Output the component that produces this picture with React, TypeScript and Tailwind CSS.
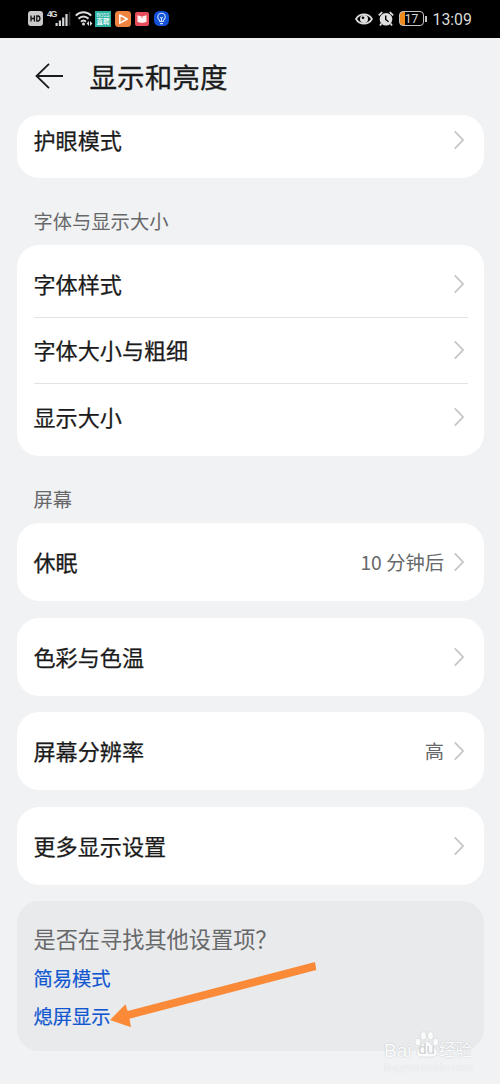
import type { ReactNode } from 'react';

const fontRows = ["字体样式", "字体大小与粗细", "显示大小"];

const screenRows = [
  { title: "休眠", value: "10 分钟后" },
  { title: "色彩与色温", value: "" },
  { title: "屏幕分辨率", value: "高" },
  { title: "更多显示设置", value: "" }
];

function Chevron() {
  return (
    <svg className="w-[10px] h-[20px] shrink-0" viewBox="0 0 10 20" fill="none" stroke="#c3c4c5" strokeWidth="1.7">
      <path d="M0.8 1.4L9 10L0.8 18.6" />
    </svg>
  );
}

function Row({ title, value }: { title: string; value?: string }) {
  return (
    <div className="flex w-full items-center justify-between">
      <span className="-mt-[2px] text-[22.1px] leading-8 text-[#1b1b1b] [-webkit-text-stroke:0.25px_#1b1b1b]">{title}</span>
      <div className="flex items-center gap-[10px] pr-[3.5px]">
        {value && <span className="text-[19.3px] leading-7 text-[#67686a]">{value}</span>}
        <Chevron />
      </div>
    </div>
  );
}

function Card({ children, className }: { children: ReactNode; className: string }) {
  return (
    <div className={`mx-[16.5px] rounded-[22px] bg-white pl-[17px] pr-[16px] ${className}`}>
      {children}
    </div>
  );
}

function StatusBar() {
  return (
    <div className="flex h-[37.5px] items-center justify-between bg-black pl-[28px] pr-[28px] text-[#d9d9d9]">
      <div className="flex items-center">
        {/* HD */}
        <svg className="w-[15px] h-[15px]" viewBox="0 0 15 15">
          <rect width="15" height="15" rx="3" fill="#c9c9c9" />
          <path d="M3 4.5V10.5M6.4 4.5V10.5M3 7.5H6.4M8.8 5V10H9.8C12.6 10 12.6 5 9.8 5Z" fill="none" stroke="#111" strokeWidth="1.3" />
        </svg>
        {/* signal */}
        <div className="ml-[4px] flex items-start">
          <span className="-mt-[1px] w-[8px] font-['Liberation_Sans',sans-serif] text-[9px] leading-[9px] font-bold tracking-[-1.5px]">4G</span>
          <svg className="w-[16px] h-[16px]" viewBox="0 0 16 16" fill="#d6d6d6">
            <rect x="0.5" y="12" width="2.2" height="3" />
            <rect x="3.8" y="9.5" width="2.2" height="5.5" />
            <rect x="7.1" y="6.5" width="2.2" height="8.5" />
            <rect x="10.4" y="3" width="2.2" height="12" />
            <rect x="13.7" y="1" width="1.6" height="14" fill="#333" />
          </svg>
        </div>
        {/* wifi */}
        <svg className="ml-[4px] w-[18px] h-[17px]" viewBox="0 0 18 17" fill="none" stroke="#dcdcdc" strokeWidth="2">
          <path d="M0.8 5.6C5 1.2 12 1.2 16.2 5.6M3.5 8.8C6.4 5.8 10.6 5.8 13.5 8.8M6 11.7C7.6 10.1 9.4 10.1 11 11.7" />
          <circle cx="8.5" cy="14" r="1.5" fill="#dcdcdc" stroke="none" />
          <path d="M14 11L11.6 13.5L14 16ZM15 11L17.4 13.5L15 16Z" fill="#dcdcdc" stroke="none" />
        </svg>
        <div className="ml-[2px] flex h-[16px] w-[16px] flex-col items-center justify-center bg-[#2fb4a4] text-white/90">
          <span className="text-[5px] leading-[6px]">BOSS</span>
          <span className="text-[6.5px] leading-[7px] font-bold">直聘</span>
        </div>
        <svg className="ml-[4px] w-[16px] h-[16px]" viewBox="0 0 16 16">
          <rect width="16" height="16" rx="3.5" fill="#ee8440" />
          <path d="M4.8 3.8V12.2L12.2 8Z" fill="#f08a4c" stroke="#fff" strokeWidth="1.5" strokeLinejoin="round" />
        </svg>
        <svg className="ml-[4px] w-[14px] h-[14px]" viewBox="0 0 14 14">
          <rect width="14" height="14" rx="2" fill="#e64c5c" />
          <path d="M2.5 3.2L7 4.6L11.5 3.2V10L7 11L2.5 10Z" fill="#fff1f1" />
          <path d="M7 4.6V6" stroke="#e64c5c" strokeWidth="0.8" />
        </svg>
        <svg className="ml-[5px] w-[15px] h-[15px]" viewBox="0 0 15 15">
          <rect width="15" height="15" rx="5.5" fill="#1351d8" />
          <path d="M5.8 10.5C5.6 8.8 3.8 8.3 3.8 5.9A3.7 3.7 0 0 1 11.2 5.9C11.2 8.3 9.4 8.8 9.2 10.5ZM6 12.6H9M6.3 6L7.5 7.5L8.7 6M7.5 7.5V10" fill="none" stroke="#cfe2ff" strokeWidth="1.1" />
        </svg>
      </div>

      <div className="flex items-center">
        {/* eye comfort */}
        <svg className="w-[18px] h-[14px]" viewBox="0 0 18 14">
          <path d="M1 7C4.5 0.8 13.5 0.8 17 7C13.5 13.2 4.5 13.2 1 7Z" fill="none" stroke="#dedede" strokeWidth="1.6" />
          <circle cx="9" cy="7" r="4" fill="#dedede" />
          <circle cx="8" cy="5.8" r="1.3" fill="#000" />
        </svg>
        {/* alarm */}
        <svg className="ml-[5px] w-[16px] h-[16px]" viewBox="0 0 16 16">
          <path d="M0.8 4.4L4.2 1.2M15.2 4.4L11.8 1.2M3.5 12.5L2 14.5M12.5 12.5L14 14.5" stroke="#dedede" strokeWidth="1.8" />
          <circle cx="8" cy="8.2" r="6.3" fill="#dedede" />
          <path d="M7.7 4.5V8.5L10.5 10.8" fill="none" stroke="#000" strokeWidth="1.4" />
        </svg>
        {/* battery */}
        <div className="ml-[5px] flex h-[15px] w-[25px] items-center justify-center rounded-[4px] border-[1.5px] border-[#c4c4c4] bg-linear-to-r from-[#ef8a1d] from-20% to-black to-20% font-[Roboto] text-[12px] leading-none">
          17
        </div>
        <div className="ml-[1px] h-[6px] w-[1.5px] bg-[#c4c4c4]" />
        <span className="ml-[6px] w-[39.5px] pt-[2px] font-[Roboto] text-[15.8px] leading-none">13:09</span>
      </div>
    </div>
  );
}

function Watermark() {
  return (
    <div className="absolute left-[384px] top-[1030px] text-[#fafbfb]">
      <svg className="absolute left-[30px] top-0 w-[26px] h-[28px]" viewBox="0 0 26 29" fill="#fafbfb" stroke="#d5d6d8" strokeWidth="0.7">
        <ellipse cx="3.5" cy="12.5" rx="3" ry="4" />
        <ellipse cx="9.3" cy="6" rx="3" ry="4.2" />
        <ellipse cx="16.6" cy="6" rx="3" ry="4.2" />
        <ellipse cx="22" cy="12.5" rx="3" ry="4" />
        <path d="M12.8 12C9 12 8 16 5 18.5C0.5 22 2 28 7 28H19C24 28 25.5 22 21 18.5C17.5 16 16.6 12 12.8 12Z" />
      </svg>
      <div className="relative flex h-[30px] items-end whitespace-nowrap font-['Liberation_Sans','Noto_Sans_CJK_SC',sans-serif] leading-[18px] [text-shadow:0_0_1.5px_#b8babd]">
        <span className="w-[30px] text-[19px]">Bai</span>
        <span className="w-[25px] pb-[2px] text-center text-[15px] text-[#cfd0d2] [text-shadow:none]">du</span>
        <span className="pb-[1px] text-[16.5px]">经验</span>
      </div>
      <div className="font-['Liberation_Sans',sans-serif] text-[11px] leading-[14px] text-[#f6f7f8] [text-shadow:0_0_1px_#d0d1d3]">jingyan.baidu.com</div>
    </div>
  );
}

export default function App() {
  return (
    <div className="relative h-[1084px] w-[500px] overflow-hidden bg-[#f1f2f4] font-['Noto_Sans_CJK_SC',sans-serif]">
      <StatusBar />

      <div className="flex h-[77.5px] items-center pl-[35px]">
        <svg className="w-[29px] h-[26px]" viewBox="0 0 29 26" fill="none" stroke="#1b1b1b" strokeWidth="1.8">
          <path d="M28 13H1.5M14 0.8L1.5 13L14 25.2" />
        </svg>
        <h1 className="ml-[25.5px] text-[27.6px] leading-10 text-[#1b1b1b] [-webkit-text-stroke:0.3px_#1b1b1b]">显示和亮度</h1>
      </div>

      <Card className="flex h-[63px] items-start pt-[10px]">
        <Row title="护眼模式" />
      </Card>

      <div className="flex h-[67px] items-end pb-[10px] pl-[33.5px] text-[19.3px] leading-7 text-[#67686a]">字体与显示大小</div>
      <Card className="h-[211px] pt-[6px]">
        {fontRows.map((title, index) => (
          <div
            key={index}
            className="flex h-[66.6px] items-center border-[#e2e3e4] not-last:border-b"
          >
            <Row title={title} />
          </div>
        ))}
      </Card>

      <div className="flex h-[67px] items-end pb-[10px] pl-[33.5px] text-[19.3px] leading-7 text-[#67686a]">屏幕</div>
      <div className="flex flex-col gap-[16.5px]">
        {screenRows.map((row, index) => (
          <Card key={index} className="flex h-[78px] items-center">
            <Row title={row.title} value={row.value} />
          </Card>
        ))}

        <div className="mx-[16.5px] flex h-[149.5px] flex-col rounded-[22px] bg-[#e9eaec] pl-[17px] pt-[21px]">
          <p className="text-[22.2px] leading-8 text-[#67686a]">是否在寻找其他设置项？</p>
          <a className="mt-[8px] text-[19.3px] leading-8 text-[#1257d0] [-webkit-text-stroke:0.2px_#1257d0]">简易模式</a>
          <a className="mt-[6px] text-[19.3px] leading-8 text-[#1257d0] [-webkit-text-stroke:0.2px_#1257d0]">熄屏显示</a>
        </div>
      </div>

      {/* pointer to the last link */}
      <svg className="absolute left-[108px] top-[958px] w-[212px] h-[74px]" viewBox="0 0 212 74">
        <path d="M2 62L17.5 46.3L19.7 53L207 4L208.3 12L21.5 60.7L23 69.3Z" fill="#fa8a38" />
      </svg>

      <Watermark />
    </div>
  );
}
